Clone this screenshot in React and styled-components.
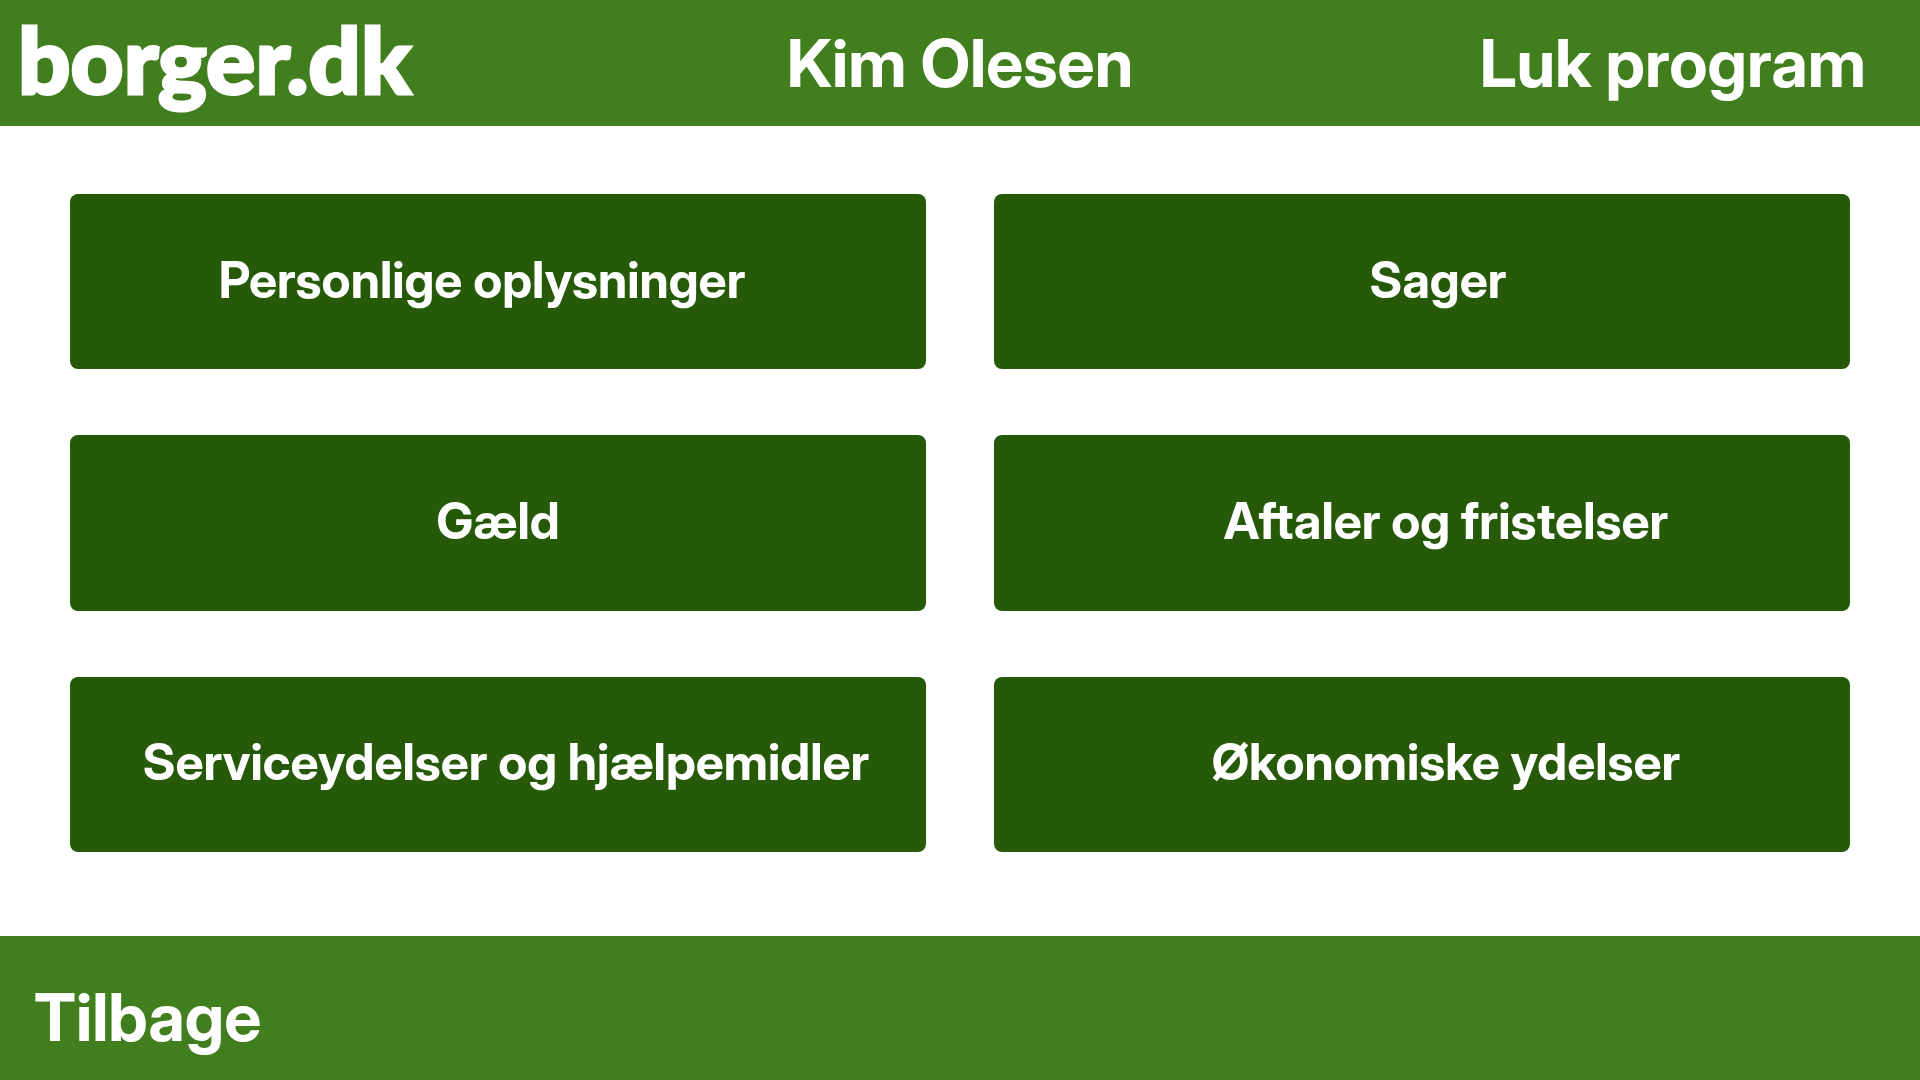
import React from "react";
import styled, { createGlobalStyle } from "styled-components";

const GlobalStyle = createGlobalStyle`
  * { box-sizing: border-box; }
  body {
    margin: 0;
    background: #ffffff;
    font-family: "Inter Display", Inter, "Liberation Sans", sans-serif;
  }
`;

const Page = styled.div`
  display: flex;
  flex-direction: column;
  min-height: 100vh;
`;

const Header = styled.header`
  display: grid;
  grid-template-columns: 1fr auto 1fr;
  align-items: center;
  min-height: 126px;
  background: #417e1d;
  color: #ffffff;
`;

const Logo = styled.a`
  justify-self: start;
  padding: 0 0 8px 18px;
  color: inherit;
  font-family: Lato, sans-serif;
  font-size: 92px;
  font-weight: 900;
  line-height: 112px;
  text-decoration: none;
  -webkit-text-stroke: 3px #ffffff;
`;

const UserName = styled.h1`
  margin: 0;
  font-size: 66px;
  font-weight: 700;
  line-height: 80px;
`;

const BarButton = styled.button`
  padding: 0;
  border: 0;
  background: none;
  color: inherit;
  font: inherit;
  font-size: 66px;
  font-weight: 700;
  line-height: 80px;
  cursor: pointer;
`;

const CloseButton = styled(BarButton)`
  justify-self: end;
  margin-right: 54px;
`;

const Menu = styled.nav`
  flex: 1;
  display: grid;
  grid-template-columns: repeat(2, minmax(0, 1fr));
  grid-auto-rows: minmax(174px, 1fr);
  gap: 66px 68px;
  padding: 68px 70px 84px;
`;

const Tile = styled.button`
  padding: 0 ${(p) => p.$after || 0}px 4px ${(p) => p.$before || 0}px;
  border: 0;
  border-radius: 8px;
  background: #265a08;
  color: #ffffff;
  font: inherit;
  font-size: 50px;
  font-weight: 700;
  line-height: 64px;
  text-align: center;
  cursor: pointer;
`;

const Footer = styled.footer`
  display: flex;
  align-items: center;
  min-height: 144px;
  padding: 18px 34px 0;
  background: #417e1d;
  color: #ffffff;
`;

const tiles = [
  { label: "Personlige oplysninger", after: 32 },
  { label: "Sager", before: 32 },
  { label: "Gæld" },
  { label: "Aftaler og fristelser", before: 48 },
  { label: "Serviceydelser og hjælpemidler", before: 16 },
  { label: "Økonomiske ydelser", before: 48 },
];

export default function App() {
  return (
    <Page>
      <GlobalStyle />
      <Header>
        <Logo href="#">borger.dk</Logo>
        <UserName>Kim Olesen</UserName>
        <CloseButton type="button">Luk program</CloseButton>
      </Header>
      <Menu>
        {tiles.map((t) => (
          <Tile key={t.label} type="button" $before={t.before} $after={t.after}>
            {t.label}
          </Tile>
        ))}
      </Menu>
      <Footer>
        <BarButton type="button">Tilbage</BarButton>
      </Footer>
    </Page>
  );
}
